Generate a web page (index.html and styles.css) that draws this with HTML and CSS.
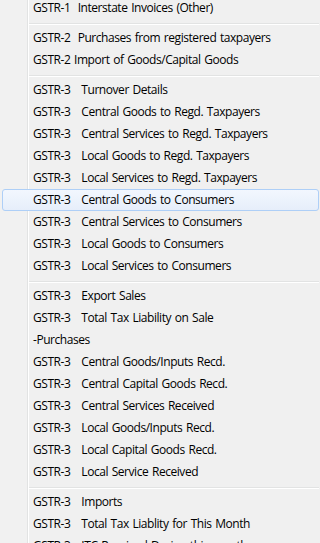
FILE: index.html
```html
<!DOCTYPE html>
<html lang="en">
<head>
  <meta charset="UTF-8">
  <meta name="viewport" content="width=device-width, initial-scale=1.0">
  <link rel="stylesheet" href="styles.css">
  <title>GST Returns Menu</title>
</head>
<body>
  <ul class="menu">
    <li class="menu__item">GSTR-1  Interstate Invoices (Other)</li>
    <li class="menu__sep"></li>
    <li class="menu__item">GSTR-2  Purchases from registered taxpayers</li>
    <li class="menu__item">GSTR-2 Import of Goods/Capital Goods</li>
    <li class="menu__sep"></li>
    <li class="menu__item">GSTR-3   Turnover Details</li>
    <li class="menu__item">GSTR-3   Central Goods to Regd. Taxpayers</li>
    <li class="menu__item">GSTR-3   Central Services to Regd. Taxpayers</li>
    <li class="menu__item">GSTR-3   Local Goods to Regd. Taxpayers</li>
    <li class="menu__item">GSTR-3   Local Services to Regd. Taxpayers</li>
    <li class="menu__item is-hover">GSTR-3   Central Goods to Consumers</li>
    <li class="menu__item">GSTR-3   Central Services to Consumers</li>
    <li class="menu__item">GSTR-3   Local Goods to Consumers</li>
    <li class="menu__item">GSTR-3   Local Services to Consumers</li>
    <li class="menu__sep"></li>
    <li class="menu__item">GSTR-3   Export Sales</li>
    <li class="menu__item">GSTR-3   Total Tax Liability on Sale</li>
    <li class="menu__item">-Purchases</li>
    <li class="menu__item">GSTR-3   Central Goods/Inputs Recd.</li>
    <li class="menu__item">GSTR-3   Central Capital Goods Recd.</li>
    <li class="menu__item">GSTR-3   Central Services Received</li>
    <li class="menu__item">GSTR-3   Local Goods/Inputs Recd.</li>
    <li class="menu__item">GSTR-3   Local Capital Goods Recd.</li>
    <li class="menu__item">GSTR-3   Local Service Received</li>
    <li class="menu__sep"></li>
    <li class="menu__item">GSTR-3   Imports</li>
    <li class="menu__item">GSTR-3   Total Tax Liablity for This Month</li>
    <li class="menu__item">GSTR-3   ITC Received During this month</li>
  </ul>
</body>
</html>
```

FILE: styles.css
```css
html, body {
  margin: 0;
  height: 100%;
  overflow: hidden;
  background: #f0f0f0;
}

.menu {
  list-style: none;
  margin: -3px 0 0 0;
  padding: 0;
  font-family: "Segoe UI", "Open Sans", sans-serif;
  font-size: 12px;
  letter-spacing: -0.45px;
  word-spacing: 1px;
  color: #000;
  /* gutter with its etched line */
  background: linear-gradient(to right, #f1f1f1 27px, #e2e3e3 27px 28px, #fff 28px 29px, #f0f0f0 29px);
  min-height: 600px;
}

.menu__item {
  height: 22px;
  line-height: 22px;
  padding-left: 33px;
  white-space: pre;
}

.menu__item.is-hover {
  height: 20px;
  line-height: 20px;
  margin: 0 1px 0 2px;
  padding-left: 30px;
  border: 1px solid #aecff7;
  border-radius: 3px;
  background: linear-gradient(#f2f7fe, #e6eefa);
}

.menu__sep {
  height: 8px;
  margin: 0 1px 0 29px;
  background: linear-gradient(transparent 4px, #e2e3e3 4px 5px, #fff 5px 6px, transparent 6px);
}
```
